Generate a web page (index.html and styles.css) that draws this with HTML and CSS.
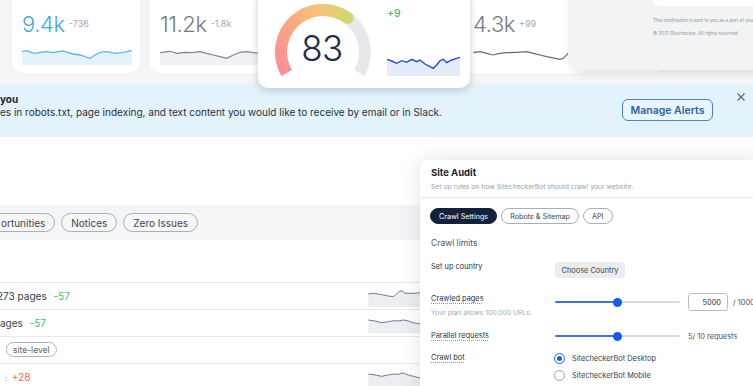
FILE: index.html
```html
<!DOCTYPE html>
<html>
<head>
<meta charset="utf-8">
<link rel="stylesheet" href="styles.css">
</head>
<body>
<div class="page">
  <div class="stats">
    <div class="card card-a">
      <div class="stat"><span class="num num-blue">9.4k</span><span class="delta">-736</span></div>
      <svg class="spark spark-a" width="110" height="15" viewBox="0 0 110 15">
        <polygon fill="#e3f2fb" points="0,1.7 4.7,0.7 9.7,2.7 13,3.3 18,2.3 24.7,1.7 31.3,2.7 36.3,1.7 41.3,1 46.3,2.7 51.3,4 58,5 63,6.7 68,8.3 73,5 78,2.3 84.7,1.7 89.7,2.7 94.7,3.3 99.7,2.7 104.7,1.7 109.7,0.7 109.7,15 0,15"/>
        <polyline fill="none" stroke="#5db5ea" stroke-width="1.3" points="0,1.7 4.7,0.7 9.7,2.7 13,3.3 18,2.3 24.7,1.7 31.3,2.7 36.3,1.7 41.3,1 46.3,2.7 51.3,4 58,5 63,6.7 68,8.3 73,5 78,2.3 84.7,1.7 89.7,2.7 94.7,3.3 99.7,2.7 104.7,1.7 109.7,0.7"/>
      </svg>
    </div>
    <div class="card card-b">
      <div class="stat"><span class="num">11.2k</span><span class="delta">-1.8k</span></div>
      <svg class="spark" width="118" height="15" viewBox="0 0 118 15">
        <polygon fill="#eff1f3" points="0,2.7 10,1.3 16.7,3.3 25,2.3 31.7,2.7 40,1.7 46.7,3.3 53.3,5 60,6.7 66.7,8.3 73.3,5 80,2.3 86.7,1.7 93.3,2.7 100,3.3 110,2.5 118,2 118,15 0,15"/>
        <polyline fill="none" stroke="#7d8596" stroke-width="1.2" points="0,2.7 10,1.3 16.7,3.3 25,2.3 31.7,2.7 40,1.7 46.7,3.3 53.3,5 60,6.7 66.7,8.3 73.3,5 80,2.3 86.7,1.7 93.3,2.7 100,3.3 110,2.5 118,2"/>
      </svg>
    </div>
    <div class="card card-c"></div>
    <div class="card card-d">
      <div class="stat"><span class="num">4.3k</span><span class="delta">+99</span></div>
      <svg class="spark spark-d" width="100" height="14" viewBox="0 0 100 14">
        <polyline fill="none" stroke="#5f6b85" stroke-width="1.2" points="0.3,4.7 7,3.7 13.7,5.3 20.3,7 27,5.3 33.7,4.7 43.7,4.3 53.7,3.7 60.3,5.3 67,7 73.7,8.7 82,10.3 87,11.3 90.3,10.3 95.3,5.3 100,3"/>
      </svg>
    </div>
  </div>

  <div class="banner">
    <div class="banner-text">
      <div class="banner-title">you</div>
      <div class="banner-body">es in robots.txt, page indexing, and text content you would like to receive by email or in Slack.</div>
    </div>
    <div class="btn-alerts">Manage Alerts</div>
    <svg class="close" width="8" height="8" viewBox="0 0 8 8"><path d="M0.5 0.5 L7.5 7.5 M7.5 0.5 L0.5 7.5" stroke="#5b6270" stroke-width="1.1"/></svg>
  </div>

  <div class="blank"></div>

  <div class="filters">
    <span class="pill pill-cut">ortunities</span>
    <span class="pill">Notices</span>
    <span class="pill">Zero Issues</span>
  </div>

  <div class="list">
    <div class="row">
      <div class="row-text row-text-cut">273 pages <span class="pos">-57</span></div>
      <svg class="row-spark" width="52" height="19" viewBox="0 0 52 19">
        <polygon fill="#eceef1" points="0.3,6 5.3,5.3 10.3,6 15.3,7 20.3,8 25.3,8.7 28.7,6 32,2.7 35.3,3.7 37,5.3 42,5.3 47,5.3 52,4.7 52,19 0.3,19"/>
        <polyline fill="none" stroke="#6f7a93" stroke-width="1" points="0.3,6 5.3,5.3 10.3,6 15.3,7 20.3,8 25.3,8.7 28.7,6 32,2.7 35.3,3.7 37,5.3 42,5.3 47,5.3 52,4.7"/>
      </svg>
    </div>
    <div class="row">
      <div class="row-text">ages <span class="pos">-57</span></div>
      <svg class="row-spark" width="52" height="18" viewBox="0 0 52 18">
        <polygon fill="#eceef1" points="0.3,5 7,6 13.7,7.7 20.3,6.7 25.3,5.7 30.3,6 35.3,5 40.3,6 45.3,7.7 52,9 52,18 0.3,18"/>
        <polyline fill="none" stroke="#6f7a93" stroke-width="1" points="0.3,5 7,6 13.7,7.7 20.3,6.7 25.3,5.7 30.3,6 35.3,5 40.3,6 45.3,7.7 52,9"/>
      </svg>
    </div>
    <div class="row">
      <span class="tag">site-level</span>
    </div>
    <div class="row">
      <div class="row-text"><span class="mark">:</span> <span class="neg">+28</span></div>
      <svg class="row-spark" width="52" height="18" viewBox="0 0 52 18">
        <polygon fill="#eceef1" points="0.3,5 7,6 13.7,7.3 20.3,6 25.3,5 30.3,5.3 35.3,4 40.3,6 45.3,7.3 52,9 52,18 0.3,18"/>
        <polyline fill="none" stroke="#6f7a93" stroke-width="1" points="0.3,5 7,6 13.7,7.3 20.3,6 25.3,5 30.3,5.3 35.3,4 40.3,6 45.3,7.3 52,9"/>
      </svg>
    </div>
  </div>

  <!-- overlays -->
  <div class="gauge-card">
    <div class="gauge">
      <svg width="110" height="92" viewBox="0 0 110 92">
        <defs>
          <linearGradient id="g" gradientUnits="userSpaceOnUse" x1="18" y1="78" x2="82" y2="16">
            <stop offset="0" stop-color="#fc8e98"/>
            <stop offset="0.45" stop-color="#f9a880"/>
            <stop offset="0.78" stop-color="#f6c478"/>
            <stop offset="1" stop-color="#cfd96c"/>
          </linearGradient>
        </defs>
        <path d="M18.63 77 A42 42 0 1 1 91.37 77" fill="none" stroke="#e7e8eb" stroke-width="12"/>
        <path d="M18.63 77 A42 42 0 0 1 79.69 22.02" fill="none" stroke="url(#g)" stroke-width="12"/>
        <circle cx="79.69" cy="22.02" r="6" fill="#cfd96c"/>
      </svg>
      <div class="score">83</div>
    </div>
    <div class="gauge-side">
      <div class="gain">+9</div>
      <svg class="gauge-spark" width="74" height="21" viewBox="0 0 74 21">
        <polygon fill="#e4ecfb" points="0,4.3 4.7,6 9.7,8.3 14.7,5.7 19.7,7.3 24.7,4.3 29.7,6.7 33,5 38,9 43,11.7 46.3,13.3 49.7,10 53,5.7 56.3,4.3 59.7,7.7 64.7,5 69.7,3.3 73,2.3 73,21 0,21"/>
        <polyline fill="none" stroke="#1d48d6" stroke-width="1.4" points="0,4.3 4.7,6 9.7,8.3 14.7,5.7 19.7,7.3 24.7,4.3 29.7,6.7 33,5 38,9 43,11.7 46.3,13.3 49.7,10 53,5.7 56.3,4.3 59.7,7.7 64.7,5 69.7,3.3 73,2.3"/>
      </svg>
    </div>
  </div>

  <div class="notice">
    <div class="notice-top"></div>
    <div class="notice-line">This notification is sent to you as a part of your</div>
    <div class="notice-line notice-line2">© 2021 Sitechecker. All rights reserved</div>
  </div>

  <div class="audit">
    <div class="audit-head">
      <div class="audit-title">Site Audit</div>
      <div class="audit-sub">Set up rules on how SitecheckerBot should crawl your website.</div>
    </div>
    <div class="tabs">
      <span class="tab tab-active">Crawl Settings</span>
      <span class="tab">Robots &amp; Sitemap</span>
      <span class="tab">API</span>
    </div>
    <div class="section-title">Crawl limits</div>

    <div class="frow frow-country">
      <div class="flabel">Set up country</div>
      <div class="btn-country">Choose Country</div>
    </div>

    <div class="frow frow-pages">
      <div class="flabel-col">
        <div class="flabel dotted">Crawled pages</div>
        <div class="hint">Your plan allows 100,000 URLs.</div>
      </div>
      <div class="controls">
        <div class="slider"><div class="slider-fill"></div><div class="slider-thumb"></div></div>
        <div class="num-input">5000</div>
        <div class="ctrl-text ctrl-slash">/ 10000</div>
      </div>
    </div>

    <div class="frow frow-parallel">
      <div class="flabel dotted">Parallel requests</div>
      <div class="controls">
        <div class="slider"><div class="slider-fill"></div><div class="slider-thumb"></div></div>
        <div class="ctrl-text ctrl-req">5/ 10 requests</div>
      </div>
    </div>

    <div class="frow frow-bot">
      <div class="flabel dotted">Crawl bot</div>
      <div class="radios">
        <div class="radio-opt"><span class="radio radio-on"></span>SitecheckerBot Desktop</div>
        <div class="radio-opt"><span class="radio"></span>SitecheckerBot Mobile</div>
      </div>
    </div>
  </div>
</div>
</body>
</html>
```
FILE: styles.css
```css
* { box-sizing: border-box; }
html, body { margin: 0; padding: 0; }
body {
  width: 753px;
  height: 386px;
  overflow: hidden;
  font-family: Inter, "Open Sans", sans-serif;
  color: #2e3442;
  background: #f3f5f7;
}
.page {
  position: relative;
  width: 753px;
  height: 386px;
  overflow: hidden;
  background: #f3f5f7;
}

/* stats */
.stats {
  display: flex;
  gap: 10px;
  padding-left: 12px;
  margin-top: -12px;
  height: 85px;
}
.card {
  background: #fff;
  border-radius: 10px;
  padding: 24px 10px 0;
  height: 85px;
  flex: none;
}
.card-a { width: 128px; }
.card-b { width: 128px; }
.card-c { width: 165px; }
.card-d { width: 200px; }
.stat { white-space: nowrap; height: 24px; line-height: 24px; }
.num {
  font-size: 22px;
  font-weight: 300;
  color: #737b8b;
  letter-spacing: -0.4px;
}
.num-blue { color: #4aa7e2; }
.delta {
  font-size: 9px;
  color: #a0a6b0;
  margin-left: 4px;
  vertical-align: 5px;
}
.spark { display: block; margin-top: 14px; }
.spark-d { margin-top: 12px; }

/* banner */
.banner {
  margin-top: 11px;
  height: 53px;
  background: #e2f3fc;
  display: flex;
  align-items: flex-start;
}
.banner-text { flex: 1; padding-top: 9px; white-space: nowrap; }
.banner-title { font-size: 10px; line-height: 13px; font-weight: 700; color: #1f2633; }
.banner-body { font-size: 10px; line-height: 13px; color: #2a303c; }
.btn-alerts {
  margin-top: 15px;
  width: 91px;
  height: 22px;
  border: 1.5px solid #4a84c6;
  border-radius: 6px;
  font-size: 10.5px;
  font-weight: 600;
  color: #2d62a6;
  display: flex;
  align-items: center;
  justify-content: center;
  background: #e8f5fd;
}
.close { display: block; margin: 9px 8px 0 24px; flex: none; }

.blank { height: 68px; background: #fff; }

.filters {
  height: 35px;
  background: #f3f5f7;
  padding-top: 8px;
  display: flex;
  gap: 6px;
}
.pill {
  height: 19px;
  border: 1px solid #aab0b8;
  border-radius: 10px;
  padding: 0 9px;
  font-size: 10px;
  color: #3d4452;
  display: flex;
  align-items: center;
  background: #f5f7f9;
}
.pill-cut { margin-left: -12px; padding-left: 12px; }

.list { background: #fff; height: 146px; padding-top: 42px; width: 753px; }
.row {
  width: 420px;
  height: 27px;
  border-top: 1.5px solid #e6e8eb;
  display: flex;
  justify-content: space-between;
  align-items: flex-start;
}
.row-text {
  font-size: 10px;
  line-height: 12px;
  color: #3a404d;
  margin-top: 7px;
  white-space: nowrap;
}
.row-text-cut { margin-left: -3px; }
.pos { color: #3cc36a; margin-left: 4px; }
.neg { color: #ee6c59; margin-left: 2px; }
.mark { font-size: 7px; color: #777; margin-left: 5px; }
.row-spark { display: block; margin-top: 5px; flex: none; }
.tag {
  margin: 5px 0 0 6px;
  height: 15px;
  border: 1px solid #aeb3ba;
  border-radius: 8px;
  padding: 0 6px;
  font-size: 8.5px;
  color: #5d6472;
  display: flex;
  align-items: center;
}

/* gauge card overlay */
.gauge-card {
  position: absolute;
  left: 258px;
  top: -12px;
  width: 212px;
  height: 100px;
  background: #fff;
  border-radius: 10px;
  box-shadow: 0 2px 9px rgba(25, 35, 55, 0.2);
  display: flex;
  padding: 8px 0 0 10px;
}
.gauge { position: relative; width: 110px; height: 92px; flex: none; }
.gauge svg { display: block; }
.score {
  position: absolute;
  left: 0;
  right: 0;
  top: 34px;
  text-align: center;
  font-size: 35px;
  line-height: 36px;
  font-weight: 300;
  color: #1d2c4c;
  letter-spacing: -0.5px;
  padding-right: 2px;
}
.gauge-side { margin-left: 9px; display: flex; flex-direction: column; }
.gain { margin-top: 12px; font-size: 10.5px; line-height: 12px; font-weight: 500; color: #3cc36a; }
.gauge-spark { display: block; margin-top: 35px; }

/* notification overlay */
.notice {
  position: absolute;
  left: 568px;
  top: -12px;
  width: 200px;
  height: 82px;
  background: #f1f3f5;
  border-radius: 0 0 0 16px;
  box-shadow: 0 6px 8px -3px rgba(0, 0, 0, 0.12);
  padding-left: 85px;
}
.notice-top {
  height: 18px;
  background: #fff;
  border-radius: 0 0 0 6px;
}
.notice-line {
  font-size: 4.6px;
  line-height: 6px;
  color: #8e949d;
  margin-top: 12px;
  white-space: nowrap;
}
.notice-line2 { margin-top: 7px; }

/* site audit overlay */
.audit {
  position: absolute;
  left: 420px;
  top: 160px;
  width: 345px;
  height: 240px;
  background: #fff;
  border-radius: 8px 0 0 0;
  box-shadow: 0 0 22px rgba(20, 30, 50, 0.12);
}
.audit-head {
  height: 38px;
  padding: 7px 11px 0;
  border-bottom: 1px solid #e7e9ec;
}
.audit-title { font-size: 9.5px; line-height: 12px; font-weight: 700; color: #1b2130; }
.audit-sub { font-size: 6.8px; line-height: 10px; margin-top: 3px; color: #9ba1aa; white-space: nowrap; }
.tabs { display: flex; gap: 4px; padding-left: 10px; margin-top: 10px; }
.tab {
  height: 16px;
  border: 1px solid #a8aeb6;
  border-radius: 8px;
  padding: 0 8px;
  font-size: 7.2px;
  color: #3a4150;
  display: flex;
  align-items: center;
  white-space: nowrap;
}
.tab-active { background: #14213d; border-color: #14213d; color: #fff; }
.section-title {
  margin: 13px 0 0 11px;
  font-size: 8.5px;
  line-height: 12px;
  color: #4b5261;
}
.frow { display: flex; align-items: flex-start; padding-left: 11px; }
.frow-country { margin-top: 12px; }
.frow-pages { margin-top: 15px; }
.frow-parallel { margin-top: 11px; align-items: center; }
.frow-bot { margin-top: 10px; }
.flabel {
  width: 124px;
  font-size: 7.4px;
  line-height: 12px;
  color: #2c3340;
  flex: none;
}
.flabel-col { width: 124px; flex: none; }
.dotted {
  text-decoration: underline dotted #8f959e;
  text-underline-offset: 2px;
}
.hint { font-size: 6.8px; line-height: 12px; margin-top: 2px; color: #a4aab2; }
.btn-country {
  margin-top: 1px;
  width: 70px;
  height: 16px;
  background: #ebecee;
  border-radius: 4px;
  font-size: 7.4px;
  color: #3d4452;
  display: flex;
  align-items: center;
  justify-content: center;
}
.controls { display: flex; align-items: center; height: 18px; }
.frow-parallel .controls { height: 12px; }
.slider {
  position: relative;
  width: 125px;
  height: 2px;
  background: #d9dce1;
  border-radius: 1px;
}
.slider-fill { width: 62px; height: 2px; background: #3e72e6; border-radius: 1px; }
.slider-thumb {
  position: absolute;
  left: 58px;
  top: -3.5px;
  width: 9px;
  height: 9px;
  border-radius: 50%;
  background: #1859ef;
}
.num-input {
  margin-left: 8px;
  width: 40px;
  height: 18px;
  border: 1px solid #b9bdc4;
  border-radius: 3px;
  font-size: 7.4px;
  color: #2c3340;
  display: flex;
  align-items: center;
  justify-content: flex-end;
  padding-right: 6px;
}
.ctrl-text { font-size: 7.4px; color: #4b5261; white-space: nowrap; }
.ctrl-slash { margin-left: 5px; }
.ctrl-req { margin-left: 8px; }
.radios { display: flex; flex-direction: column; gap: 5px; margin-left: -1px; }
.radio-opt {
  display: flex;
  align-items: center;
  height: 12px;
  font-size: 7.4px;
  color: #3a4150;
  white-space: nowrap;
}
.radio {
  width: 11px;
  height: 11px;
  border-radius: 50%;
  border: 1px solid #9aa0a8;
  margin-right: 7px;
  display: flex;
  align-items: center;
  justify-content: center;
  flex: none;
}
.radio-on { border: 1.5px solid #1a5cf0; }
.radio-on::after {
  content: "";
  width: 5px;
  height: 5px;
  border-radius: 50%;
  background: #1a5cf0;
}
```
